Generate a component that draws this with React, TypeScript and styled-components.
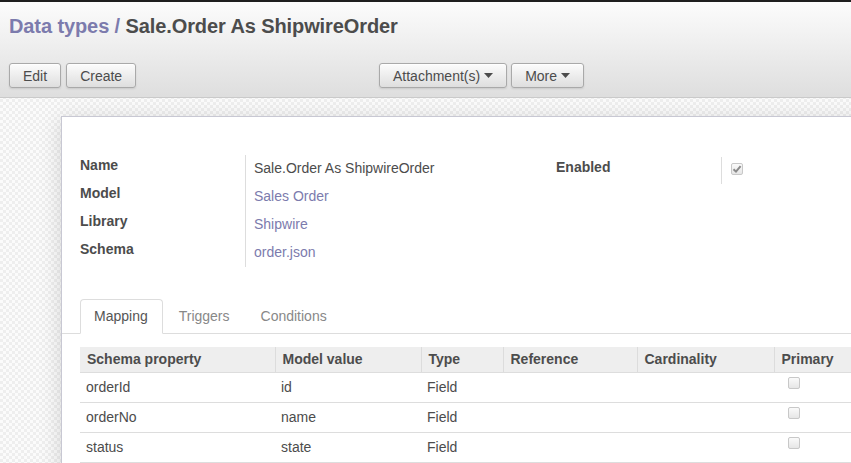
import React from "react";
import styled, { createGlobalStyle } from "styled-components";

const GlobalStyle = createGlobalStyle`
  html, body {
    margin: 0;
    padding: 0;
    overflow: hidden;
  }
  body {
    font-family: "Liberation Sans", Arial, sans-serif;
    font-size: 14px;
    color: #4c4c4c;
    background-color: #f7f7f7;
    background-image: conic-gradient(#eeeeee 25%, #fbfbfb 0 50%, #eeeeee 0 75%, #fbfbfb 0);
    background-size: 6px 6px;
  }
`;

type Row = { property: string; value: string; type: string };

const rows: Row[] = [
  { property: "orderId", value: "id", type: "Field" },
  { property: "orderNo", value: "name", type: "Field" },
  { property: "status", value: "state", type: "Field" },
];

const columns = [
  { title: "Schema property", width: 195 },
  { title: "Model value", width: 146 },
  { title: "Type", width: 82 },
  { title: "Reference", width: 134 },
  { title: "Cardinality", width: 137 },
  { title: "Primary", width: 120 },
];

const Caret = () => (
  <svg width="9" height="5" viewBox="0 0 9 5" style={{ marginLeft: 4 }}>
    <path d="M0 0 L9 0 L4.5 5 Z" fill="#4c4c4c" />
  </svg>
);

const CheckBox = ({ checked }: { checked?: boolean }) => (
  <Box>
    {checked && (
      <svg width="10" height="10" viewBox="0 0 10 10">
        <path
          d="M1.5 5.2 L4 7.6 L8.6 2.2"
          fill="none"
          stroke="#8a8a8a"
          strokeWidth="2"
        />
      </svg>
    )}
  </Box>
);

export default function App() {
  return (
    <>
      <GlobalStyle />
      <TopBar />
      <Header>
        <Title>
          <Crumb>Data types</Crumb>
          <Crumb> / </Crumb>
          <span>Sale.Order As ShipwireOrder</span>
        </Title>
        <ButtonRow>
          <ButtonGroup>
            <Button>Edit</Button>
            <Button>Create</Button>
          </ButtonGroup>
          <ButtonGroup $gap={4}>
            <Button>
              Attachment(s)
              <Caret />
            </Button>
            <Button>
              More
              <Caret />
            </Button>
          </ButtonGroup>
        </ButtonRow>
      </Header>
      <Sheet>
        <Groups>
          <Group $width={476}>
            <Label>Name</Label>
            <Value>Sale.Order As ShipwireOrder</Value>
            <Label>Model</Label>
            <Value $link>Sales Order</Value>
            <Label>Library</Label>
            <Value $link>Shipwire</Value>
            <Label>Schema</Label>
            <Value $link>order.json</Value>
          </Group>
          <Group $width={300} $offset={2}>
            <Label>Enabled</Label>
            <Value $short>
              <CheckBox checked />
            </Value>
          </Group>
        </Groups>
        <Tabs>
          <Tab $active>Mapping</Tab>
          <Tab>Triggers</Tab>
          <Tab>Conditions</Tab>
        </Tabs>
        <Table>
          <colgroup>
            {columns.map((c) => (
              <col key={c.title} style={{ width: c.width }} />
            ))}
          </colgroup>
          <thead>
            <tr>
              {columns.map((c) => (
                <Th key={c.title}>{c.title}</Th>
              ))}
            </tr>
          </thead>
          <tbody>
            {rows.map((r) => (
              <tr key={r.property}>
                <Td>{r.property}</Td>
                <Td>{r.value}</Td>
                <Td>{r.type}</Td>
                <Td />
                <Td />
                <Td $check>
                  <CheckBox />
                </Td>
              </tr>
            ))}
          </tbody>
        </Table>
      </Sheet>
    </>
  );
}

const TopBar = styled.div`
  height: 2px;
  background: #1f1f1f;
`;

const Header = styled.div`
  height: 96px;
  padding: 0 9px;
  background: linear-gradient(#fcfcfc, #dedede);
  border-bottom: 1px solid #cacaca;
  box-sizing: border-box;
`;

const Title = styled.h2`
  margin: 0;
  padding-top: 12px;
  height: 48px;
  box-sizing: border-box;
  font-size: 20px;
  line-height: 24px;
  font-weight: bold;
  letter-spacing: -0.1px;
  color: #4c4c4c;
`;

const Crumb = styled.span`
  color: #7c7bad;
`;

const ButtonRow = styled.div`
  display: grid;
  grid-template-columns: 370px auto;
  margin-top: 13px;
`;

const ButtonGroup = styled.div<{ $gap?: number }>`
  display: flex;
  gap: ${(p) => p.$gap ?? 5}px;
`;

const Button = styled.button`
  display: inline-flex;
  align-items: center;
  height: 25px;
  padding: 0 13px;
  border: 1px solid #a9a9a9;
  border-radius: 3px;
  background: linear-gradient(#fcfcfc, #dedede);
  box-shadow: 0 1px 2px rgba(0, 0, 0, 0.1), inset 0 1px 1px rgba(255, 255, 255, 0.8);
  font-family: "Liberation Sans", Arial, sans-serif;
  font-size: 14px;
  color: #4c4c4c;
`;

const Sheet = styled.div`
  margin: 18px 0 0 61px;
  width: 880px;
  min-height: 400px;
  padding: 38px 18px 0;
  background: #fff;
  border: 1px solid #c8c8d3;
  box-shadow: 0 4px 20px rgba(0, 0, 0, 0.15);
`;

const Groups = styled.div`
  display: flex;
`;

const Group = styled.div<{ $width: number; $offset?: number }>`
  display: grid;
  grid-template-columns: 165px 1fr;
  grid-auto-rows: 28px;
  width: ${(p) => p.$width}px;
  margin-top: ${(p) => p.$offset ?? 0}px;
  align-content: start;
`;

const Label = styled.div`
  font-weight: bold;
  line-height: 20px;
  color: #4c4c4c;
`;

const Value = styled.div<{ $link?: boolean; $short?: boolean }>`
  display: flex;
  align-items: flex-start;
  box-sizing: border-box;
  height: ${(p) => (p.$short ? "27px" : "auto")};
  padding: ${(p) => (p.$short ? "6px" : "3px")} 0 0 8px;
  border-left: 1px solid #ddd;
  line-height: 20px;
  color: ${(p) => (p.$link ? "#7c7bad" : "#4c4c4c")};
`;

const Box = styled.span`
  display: flex;
  align-items: center;
  justify-content: center;
  width: 12px;
  height: 12px;
  margin-left: 1px;
  border: 1px solid #c8c8c8;
  border-radius: 2px;
  background: linear-gradient(#fafafa, #e6e6e6);
  box-sizing: border-box;
`;

const Tabs = styled.div`
  display: flex;
  gap: 2px;
  margin: 32px -18px 0;
  padding-left: 18px;
  border-bottom: 1px solid #ddd;
`;

const Tab = styled.div<{ $active?: boolean }>`
  padding: 6px 14px 7px 13px;
  line-height: 20px;
  margin-bottom: -1px;
  border: 1px solid ${(p) => (p.$active ? "#ddd" : "transparent")};
  border-bottom-color: ${(p) => (p.$active ? "#fff" : "transparent")};
  border-radius: 4px 4px 0 0;
  background: ${(p) => (p.$active ? "#fff" : "transparent")};
  color: ${(p) => (p.$active ? "#555" : "#888")};
`;

const Table = styled.table`
  margin-top: 13px;
  border-collapse: collapse;
  table-layout: fixed;
  width: 814px;
`;

const Th = styled.th`
  height: 25px;
  box-sizing: border-box;
  padding: 0 7px;
  text-align: left;
  font-weight: bold;
  line-height: 20px;
  background: #eee;
  border-left: 1px solid #dcdcdc;
  border-bottom: 1px solid #ddd;
  color: #4c4c4c;
  &:first-child {
    border-left: none;
  }
`;

const Td = styled.td<{ $check?: boolean }>`
  height: 30px;
  box-sizing: border-box;
  padding: ${(p) => (p.$check ? "4px 13px 0" : "0 6px")};
  line-height: 20px;
  vertical-align: ${(p) => (p.$check ? "top" : "middle")};
  border-bottom: 1px solid #ddd;
  color: #4c4c4c;
`;
